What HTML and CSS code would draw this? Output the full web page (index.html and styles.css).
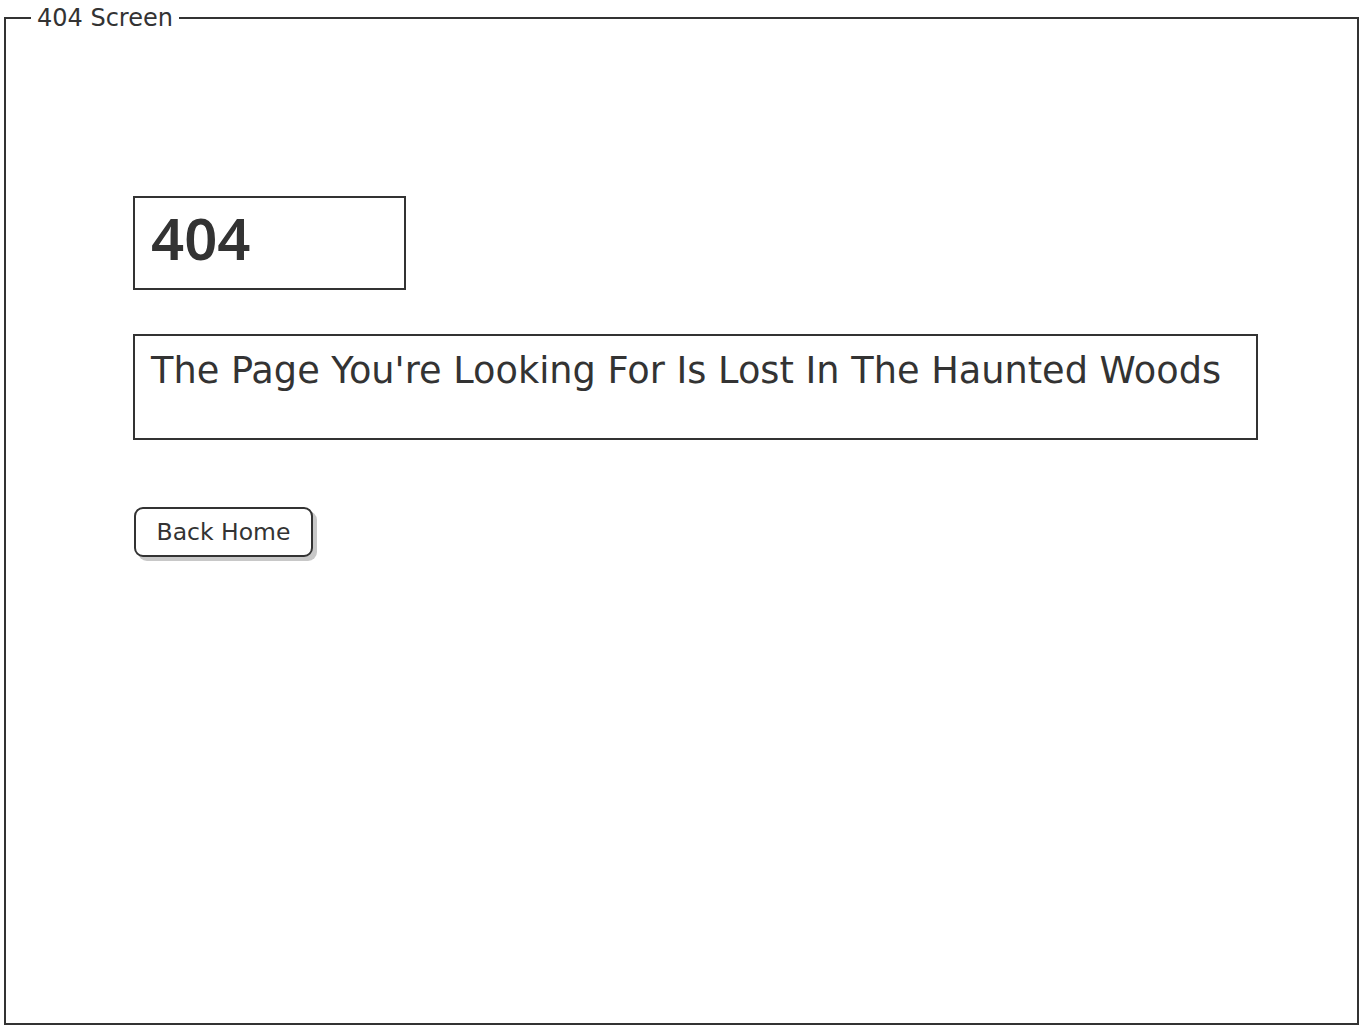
FILE: index.html
```html
<!DOCTYPE html>
<html lang="en">
<head>
    <meta charset="UTF-8">
    <title>404 Screen</title>
    <link rel="stylesheet" href="styles.css">
</head>
<body>
    <div class="frame">
        <span class="frame-label">404 Screen</span>

        <div class="content">
            <div class="code-box">404</div>

            <div class="message-box">
                The Page You're Looking For Is Lost In The Haunted Woods
            </div>

            <button class="home-btn">Back Home</button>
        </div>
    </div>
</body>
</html>
```

FILE: styles.css
```css
/* Reset */
* {
    margin: 0;
    padding: 0;
    box-sizing: border-box;
}

body {
    font-family: 'DejaVu Sans', 'Noto Sans', sans-serif;
    color: #333;
    background: #fff;
    padding: 17px 5px 5px 4px;
}

/* Outer wireframe */
.frame {
    position: relative;
    border: 2px solid #333;
    height: 1008px;
}

.frame-label {
    position: absolute;
    top: -16px;
    left: 25px;
    background: #fff;
    padding: 0 6px;
    font-size: 24px;
    line-height: 30px;
}

.content {
    padding: 177px 0 0 127px;
    display: flex;
    flex-direction: column;
    align-items: flex-start;
}

/* 404 box */
.code-box {
    width: 273px;
    height: 94px;
    border: 2px solid #333;
    padding: 5px 0 0 16px;
    font-family: 'Noto Sans', sans-serif;
    font-size: 58px;
    font-weight: 600;
    line-height: 70px;
}

/* Message box */
.message-box {
    width: 1125px;
    height: 106px;
    margin-top: 44px;
    border: 2px solid #333;
    padding: 10px 0 0 16px;
    font-size: 36.7px;
    line-height: 50px;
}

/* Button */
.home-btn {
    margin-top: 67px;
    margin-left: 1px;
    width: 179px;
    height: 50px;
    border: 2px solid #333;
    border-radius: 9px;
    background: #fff;
    color: #333;
    font-family: inherit;
    font-size: 23.5px;
    box-shadow: 4px 4px 0 #c8c8c8;
}
```
